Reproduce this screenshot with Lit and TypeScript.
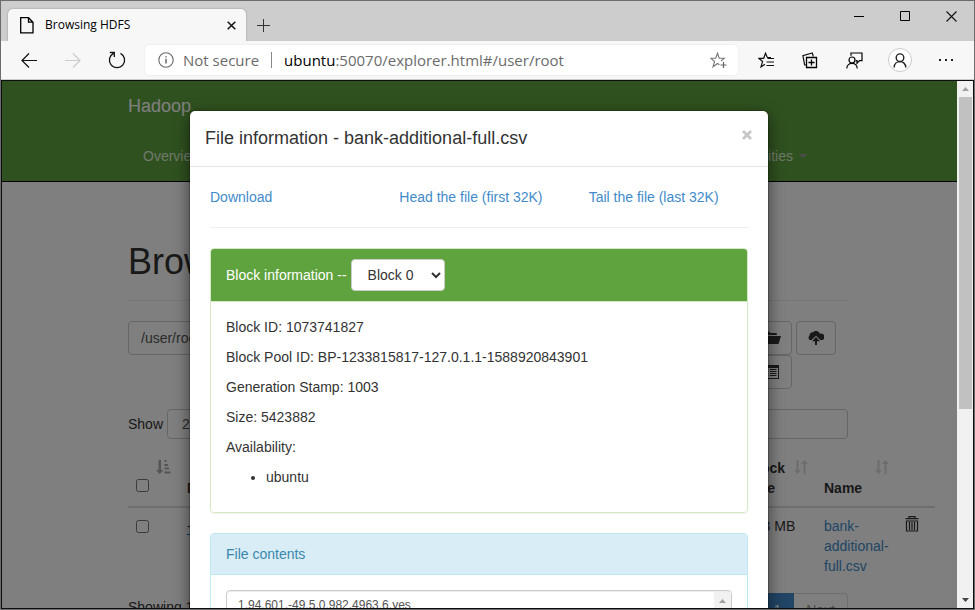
import { LitElement, html, svg, css } from "lit";
import { customElement, property } from "lit/decorators.js";

const icons = {
  doc: svg`<svg width="14" height="17" viewBox="0 0 14 17"><path d="M.7.7H8.500L13 5.200V15.800H.7ZM8.500.7V5.200H13" fill="none" stroke="#000" stroke-width="1.300"/></svg>`,
  tabClose: svg`<svg width="9" height="9" viewBox="0 0 9 9"><path d="M.7.7 8.300 8.300M8.300.7.7 8.300" stroke="#111" stroke-width="1.500"/></svg>`,
  plus: svg`<svg width="13" height="13" viewBox="0 0 13 13"><path d="M6.500 0V13M0 6.500H13" stroke="#333" stroke-width="1"/></svg>`,
  min: svg`<svg width="10" height="11" viewBox="0 0 10 11"><path d="M0 5.500H10" stroke="#000"/></svg>`,
  max: svg`<svg width="10" height="10" viewBox="0 0 10 10"><path d="M.5.5H9.500V9.500H.5Z" fill="none" stroke="#000"/></svg>`,
  close: svg`<svg width="11" height="11" viewBox="0 0 11 11"><path d="M.5.5 10.500 10.500M10.500.5.5 10.500" stroke="#111" stroke-width="1.100"/></svg>`,
  back: svg`<svg width="16" height="15" viewBox="0 0 16 15"><path d="M8 .5 1 7.500 8 14.500M1 7.500H16" fill="none" stroke="#111" stroke-width="1.200"/></svg>`,
  forward: svg`<svg width="16" height="15" viewBox="0 0 16 15"><path d="M8 .5 15 7.500 8 14.500M0 7.500H15" fill="none" stroke="#ccc" stroke-width="1.200"/></svg>`,
  reload: svg`<svg width="18" height="18" viewBox="0 0 18 18"><path d="M5.500 2.300A7.600 7.600 0 1 0 12.500 2.300M1.800 1.500H6.300V6" fill="none" stroke="#111" stroke-width="1.300"/></svg>`,
  info: svg`<svg width="16" height="16" viewBox="0 0 16 16"><circle cx="8" cy="8" r="7.200" fill="none" stroke="#666" stroke-width="1.100"/><path d="M8 6.800V11.500M8 4.200V5.400" stroke="#444" stroke-width="1.200"/></svg>`,
  starAdd: svg`<svg width="17" height="17" viewBox="0 0 17 17"><path d="M9.500 12.800 7.500 11.500 3 14.800 4.600 9.500.8 6.300H5.700L7.500 1.200 9.300 6.300H14.200L11 9" fill="none" stroke="#777" stroke-width="1.100"/><path d="M13.500 10V16M10.500 13H16.500" stroke="#666" stroke-width="1.200"/></svg>`,
  favorites: svg`<svg width="17" height="17" viewBox="0 0 17 17"><path d="M7 12.300 3 14.800 4.600 9.500.8 6.300H5.700L7.500 1.200 9.300 5.500H13" fill="none" stroke="#111" stroke-width="1.200"/><path d="M9.500 6.500H16M8.500 10H16M8.500 13.500H16" stroke="#111" stroke-width="1.200"/></svg>`,
  collections: svg`<svg width="16" height="17" viewBox="0 0 16 17"><path d="M4.500 5.500H14.500V15.500H4.500ZM9.500 7.500V13.500M6.500 10.500H12.500" fill="none" stroke="#000" stroke-width="1.300"/><path d="M3.800 12.800H2.600L.9 3.600 10.300 1 11.300 4.500" fill="none" stroke="#111" stroke-width="1.200"/></svg>`,
  feedback: svg`<svg width="17" height="17" viewBox="0 0 17 17"><circle cx="6" cy="8" r="3" fill="none" stroke="#000" stroke-width="1.200"/><path d="M.8 16.500C.8 9.700 11.200 9.700 11.200 16.500M5 3.800V1H16V8.600H13.500L11 11.300V8.600H9.800" fill="none" stroke="#000" stroke-width="1.200"/></svg>`,
  user: svg`<svg width="14" height="15" viewBox="0 0 14 15"><circle cx="7" cy="4.700" r="3.800" fill="none" stroke="#222" stroke-width="1.400"/><path d="M1.200 14.500C1.200 6.700 12.800 6.700 12.800 14.500" fill="none" stroke="#222" stroke-width="1.400"/></svg>`,
  more: svg`<svg width="16" height="4" viewBox="0 0 16 4"><path d="M1 1H3V3H1ZM7 1H9V3H7ZM13 1H15V3H13Z" fill="#222"/></svg>`,
  folder: svg`<svg width="18" height="14" viewBox="0 0 18 14"><path d="M0 11V1.500L1 .5H6L7.500 2H13.500L14 4H3.500L1 12ZM3.800 5H18L15.500 13H1.300Z" fill="#333"/></svg>`,
  upload: svg`<svg width="16" height="14" viewBox="0 0 16 14"><path d="M3.500 9H1.500A3 3 0 0 1 1.600 4.500 3.400 3.400 0 0 1 5 1.200 4.200 4.200 0 0 1 12 2.700 3 3 0 0 1 14.300 9H12.400L8 4.700Z" fill="#333"/><path d="M8 6 12 10.200H9V14H7V10.200H4Z" fill="#333"/></svg>`,
  list: svg`<svg width="14" height="14" viewBox="0 0 14 14"><path d="M0 0H14V14H0ZM1 3V13H13V3Z" fill="#333" fill-rule="evenodd"/><path d="M2.500 4.500H3.500M5 4.500H11.500M2.500 6.500H3.500M5 6.500H11.500M2.500 8.500H3.500M5 8.500H11.500M2.500 10.500H3.500M5 10.500H11.500" stroke="#333"/></svg>`,
  sort: svg`<svg width="14" height="14" viewBox="0 0 14 14"><path d="M2.500 0H4.500V10H7L3.500 14 0 10H2.500ZM9.500 14H11.500V4H14L10.500 0 7 4H9.500Z" fill="#d8d8d8"/></svg>`,
  sorted: svg`<svg width="15" height="14" viewBox="0 0 15 14"><path d="M2.500 0H5V10H7.500L3.800 14 0 10H2.500ZM8.500 0H10.500V2H8.500ZM8.500 4H12V6H8.500ZM8.500 7.500H13V9.500H8.500ZM8.500 11.500H14.500V13.500H8.500Z" fill="#aaa"/></svg>`,
  trash: svg`<svg width="14" height="16" viewBox="0 0 14 16"><path d="M4 2V.7H10V2M.5 2.700H13.500M1.500 5H12.500V15H1.500ZM4.500 6V14M7 6V14M9.500 6V14" fill="none" stroke="#333" stroke-width="1.200"/></svg>`,
  modalClose: svg`<svg width="10" height="10" viewBox="0 0 10 10"><path d="M1 1 9 9M9 1 1 9" stroke="#c6c6c6" stroke-width="2.800"/></svg>`,
  up: svg`<svg width="7" height="4" viewBox="0 0 7 4"><path d="M0 4 3.500 0 7 4Z" fill="#a0a0a0"/></svg>`,
  down: svg`<svg width="7" height="4" viewBox="0 0 7 4"><path d="M0 0H7L3.500 4Z" fill="#444"/></svg>`,
};

const reset = css`
  :host { display: block; }
  *, *::before, *::after { box-sizing: border-box; }
  svg { display: block; flex: none; }
  button { border: 0; padding: 0; margin: 0; background: none; font: inherit; color: inherit; display: flex; align-items: center; justify-content: center; }
  input, select, textarea { margin: 0; font: inherit; color: inherit; }
  a { color: #428bca; text-decoration: none; }
  ul { margin: 0; padding: 0; list-style: none; }
`;

@customElement("browser-chrome")
class BrowserChrome extends LitElement {
  @property() pageTitle = "";
  @property() host = "";
  @property() path = "";

  static styles = [reset, css`
    :host { font: 12px/16px "Open Sans", "Noto Sans", sans-serif; color: #000; }
    .tabs { display: flex; height: 40px; padding-left: 7px; background: #cdcdcd; }
    .tab { display: flex; align-items: center; width: 238px; margin-top: 8px; padding: 0 10px 0 12px; background: #f7f7f7; border-radius: 5px 5px 0 0; box-shadow: 0 0 2px #888; clip-path: inset(-3px -3px 0 -3px); }
    .tab span { flex: 1; padding-left: 11px; }
    .new { width: 34px; margin-top: 8px; }
    .controls { display: flex; margin-left: auto; height: 30px; }
    .controls button { width: 46px; }
    .bar { display: flex; align-items: center; height: 39px; padding: 0 6px; background: #f7f7f7; border-bottom: 1px solid #ccc; }
    .nav { width: 44px; height: 32px; }
    .address { display: flex; flex: 1; align-items: center; height: 30px; margin: 0 6px; padding: 0 11px 0 13px; background: #fff; border-radius: 4px; box-shadow: 0 0 2px #ddd; font-size: 15px; line-height: 20px; color: #6b6b6b; }
    .secure { display: flex; align-items: center; gap: 9px; }
    .rule { width: 1px; height: 16px; margin: 0 12px; background: #888; }
    .url { flex: 1; }
    .url b { font-weight: 400; color: #000; }
    .user { width: 24px; height: 24px; border: 1px solid #ccc; border-radius: 50%; background: #fff; margin: 0 12px; }
  `];

  render() {
    return html`
      <div class="tabs">
        <div class="tab">${icons.doc}<span>${this.pageTitle}</span><button aria-label="Close tab">${icons.tabClose}</button></div>
        <button class="new" aria-label="New tab">${icons.plus}</button>
        <div class="controls">
          <button aria-label="Minimize">${icons.min}</button>
          <button aria-label="Maximize">${icons.max}</button>
          <button aria-label="Close">${icons.close}</button>
        </div>
      </div>
      <div class="bar">
        <button class="nav" aria-label="Back">${icons.back}</button>
        <button class="nav" aria-label="Forward">${icons.forward}</button>
        <button class="nav" aria-label="Reload">${icons.reload}</button>
        <div class="address">
          <span class="secure">${icons.info}<span>Not secure</span></span>
          <span class="rule"></span>
          <span class="url"><b>${this.host}</b>${this.path}</span>
          <button aria-label="Add to favorites">${icons.starAdd}</button>
        </div>
        <button class="nav" aria-label="Favorites">${icons.favorites}</button>
        <button class="nav" aria-label="Collections">${icons.collections}</button>
        <button class="nav" aria-label="Feedback">${icons.feedback}</button>
        <button class="user" aria-label="Profile">${icons.user}</button>
        <button class="nav" aria-label="More">${icons.more}</button>
      </div>`;
  }
}

@customElement("hdfs-explorer")
class HdfsExplorer extends LitElement {
  static styles = [reset, css`
    :host { font: 14px/20px "Liberation Sans", Arial, sans-serif; color: #333; background: #fff; }
    .container { max-width: 737px; margin: 0 auto; padding-left: 17px; }
    header { background: #5fa33e; border-bottom: 1px solid #000; color: #fff; }
    .brand { display: block; height: 50px; padding-top: 15px; font-size: 18px; color: #fff; }
    .menu { display: flex; justify-content: space-between; height: 50px; padding: 15px 41px 0 15px; }
    .menu a { display: flex; align-items: center; gap: 6px; height: 20px; color: #dff0d8; }
    .caret { border: 4px solid transparent; border-top-color: #999; border-bottom: 0; }
    h1 { margin: 60px 0 20px; padding-bottom: 18px; border-bottom: 1px solid #eee; font-size: 36px; line-height: 40px; font-weight: 500; }
    .box { height: 34px; padding: 6px 12px; border: 1px solid #ccc; border-radius: 4px; background: #fff; color: #555; }
    .small { height: 30px; padding: 5px 10px; }
    .tools { display: flex; gap: 8px; }
    .tools .box { flex: 1; min-width: 0; }
    .actions { display: flex; flex-wrap: wrap; width: 84px; column-gap: 4px; margin-right: 12px; }
    .actions button { width: 40px; height: 34px; border: 1px solid #ccc; border-radius: 4px; }
    .filter { display: flex; justify-content: space-between; margin-top: 20px; }
    .filter label { display: flex; align-items: center; gap: 4px; }
    .filter select { width: 75px; appearance: none; padding: 0 14px; }
    .filter input { width: 160px; }
    table { width: calc(100% + 87px); margin-top: 11px; border-collapse: collapse; table-layout: fixed; }
    th, td { padding: 8px; text-align: left; vertical-align: top; }
    th { vertical-align: bottom; border-bottom: 2px solid #ddd; color: #333; }
    .check { width: 51px; }
    .size { width: 77px; }
    .name { width: 81px; }
    .del { width: 38px; }
    .head { display: flex; justify-content: space-between; align-items: flex-start; min-height: 40px; }
    .head span { align-self: flex-end; }
    .head svg { margin-top: 2px; }
    .check .head { display: grid; gap: 5px; justify-content: stretch; align-content: start; }
    .check .head svg { justify-self: end; }
    .check input { display: block; width: 13px; height: 13px; }
    td.check input { margin-top: 4px; }
    .perm { border-bottom: 1px dashed #08c; color: #333; }
    td .trash { height: 16px; }
    .foot { display: flex; justify-content: space-between; margin-top: 9px; }
    .foot p { margin: 4px 0; }
    .pages { display: flex; }
    .pages button { height: 34px; padding: 0 12px; border: 1px solid #ddd; color: #999; }
    .pages .on { background: #428bca; border-color: #428bca; color: #fff; }
    .pages .last { border-left: 0; border-radius: 0 4px 4px 0; }
  `];

  render() {
    return html`
      <header><div class="container">
        <a class="brand" href="#">Hadoop</a>
        <nav class="menu"><a href="#">Overview</a><a href="#">Utilities<i class="caret"></i></a></nav>
      </div></header>
      <main class="container">
        <h1>Browse</h1>
        <div class="tools">
          <input class="box" aria-label="Directory" value="/user/root">
          <div class="actions">
            <button aria-label="Create directory">${icons.folder}</button>
            <button aria-label="Upload">${icons.upload}</button>
            <button aria-label="Cut and paste">${icons.list}</button>
          </div>
        </div>
        <div class="filter">
          <label>Show <select class="box small"><option>25</option></select></label>
          <input class="box small" type="search" aria-label="Search">
        </div>
        <table>
          <thead><tr>
            <th class="check"><div class="head">${icons.sorted}<input type="checkbox" aria-label="Select all"></div></th>
            <th><div class="head"><span>Permission</span></div></th>
            <th class="size"><div class="head"><span>Block Size</span>${icons.sort}</div></th>
            <th class="name"><div class="head"><span>Name</span>${icons.sort}</div></th>
            <th class="del"></th>
          </tr></thead>
          <tbody><tr>
            <td class="check"><input type="checkbox" aria-label="Select file"></td>
            <td><a class="perm" href="#">-rw-r--r--</a></td>
            <td>128 MB</td>
            <td><a href="#">bank-additional-full.csv</a></td>
            <td><button class="trash" aria-label="Delete">${icons.trash}</button></td>
          </tr></tbody>
        </table>
        <div class="foot">
          <p>Showing 1 to 1 of 1 entries</p>
          <div class="pages"><button class="on">1</button><button class="last">Next</button></div>
        </div>
      </main>`;
  }
}

@customElement("file-dialog")
class FileDialog extends LitElement {
  @property() fileName = "";

  private details = [
    ["Block ID", "1073741827"],
    ["Block Pool ID", "BP-1233815817-127.0.1.1-1588920843901"],
    ["Generation Stamp", "1003"],
    ["Size", "5423882"],
    ["Availability", ""],
  ];

  static styles = [reset, css`
    :host { font: 14px/20px "Liberation Sans", Arial, sans-serif; color: #333; }
    .dialog { max-width: 580px; margin: 29px auto; border: 1px solid rgba(0, 0, 0, .2); border-radius: 6px; background: #fff; background-clip: padding-box; box-shadow: 0 5px 15px rgba(0, 0, 0, .5); }
    .head { display: flex; justify-content: space-between; align-items: flex-start; padding: 15px; border-bottom: 1px solid #e5e5e5; }
    h2 { margin: 0; font-size: 18px; line-height: 25px; font-weight: 400; }
    .head button { width: 12px; height: 18px; }
    .body { padding: 20px; }
    .links { display: grid; grid-template-columns: repeat(3, 1fr); margin-right: -30px; }
    hr { margin: 20px 0; border: 0; border-top: 1px solid #eee; }
    .panel { margin-bottom: 20px; border: 1px solid #d6e9c6; border-radius: 4px; box-shadow: 0 1px 1px rgba(0, 0, 0, .05); }
    .title { display: flex; align-items: center; gap: 4px; padding: 10px 15px; border-bottom: 1px solid #d6e9c6; border-radius: 3px 3px 0 0; background: #5fa33e; color: #fff; }
    select { width: 94px; height: 32px; padding: 0 0 0 12px; border: 1px solid #ccc; border-radius: 4px; background: #fff; color: #333; }
    .content { padding: 15px; }
    p { margin: 0 0 10px; }
    .nodes { margin-bottom: 10px; padding-left: 40px; list-style: disc; }
    .info { border-color: #bce8f1; }
    .info .title { border-color: #bce8f1; background: #d9edf7; color: #3a87ad; }
    .text { display: flex; height: 150px; border: 1px solid #ccc; border-radius: 4px; box-shadow: inset 0 1px 1px rgba(0, 0, 0, .08); }
    textarea { flex: 1; min-width: 0; resize: none; overflow: hidden; border: 0; background: none; padding: 4px 11px; font-size: 12px; color: #555; }
    .scroll { width: 17px; margin-top: 1px; background: #f1f1f1; }
    .scroll button { width: 17px; height: 17px; }
    .thumb { height: 60px; margin: 0 2px; background: #c1c1c1; }
  `];

  render() {
    return html`
      <section class="dialog" role="dialog" aria-labelledby="title">
        <div class="head"><h2 id="title">File information - ${this.fileName}</h2><button aria-label="Close">${icons.modalClose}</button></div>
        <div class="body">
          <div class="links"><a href="#">Download</a><a href="#">Head the file (first 32K)</a><a href="#">Tail the file (last 32K)</a></div>
          <hr>
          <div class="panel">
            <div class="title"><label for="block">Block information --</label><select id="block"><option>Block 0</option></select></div>
            <div class="content">
              ${this.details.map(([name, value]) => html`<p>${name}: ${value}</p>`)}
              <ul class="nodes"><li>ubuntu</li></ul>
            </div>
          </div>
          <div class="panel info">
            <div class="title"><label for="contents">File contents</label></div>
            <div class="content"><div class="text">
              <textarea id="contents" .value=${"1,94.601,-49.5,0.982,4963.6,yes"}></textarea>
              <div class="scroll"><button aria-label="Scroll up">${icons.up}</button><div class="thumb"></div></div>
            </div></div>
          </div>
        </div>
      </section>`;
  }
}

@customElement("app-root")
class AppRoot extends LitElement {
  static styles = [reset, css`
    .window { display: flex; flex-direction: column; height: 100vh; overflow: hidden; border: 1px solid #6c6c6c; }
    .view { display: flex; flex: 1; min-height: 0; border: 1px solid #0d0d12; border-bottom: 0; }
    .page { position: relative; flex: 1; min-width: 0; overflow: hidden; }
    .shade { position: absolute; inset: 0; overflow: hidden; padding-right: 1px; background: rgba(0, 0, 0, .5); border-bottom: 1px solid #0d0d12; }
    .scroll { display: flex; flex-direction: column; width: 16px; background: #f1f1f1; border-bottom: 1px solid #0d0d12; }
    .scroll button { height: 16px; width: 16px; }
    .track { flex: 1; }
    .thumb { height: 63%; margin: 0 1px 0 2px; background: #c1c1c1; }
  `];

  render() {
    return html`
      <div class="window">
        <browser-chrome pageTitle="Browsing HDFS" host="ubuntu" path=":50070/explorer.html#/user/root"></browser-chrome>
        <div class="view">
          <div class="page">
            <hdfs-explorer></hdfs-explorer>
            <div class="shade"><file-dialog fileName="bank-additional-full.csv"></file-dialog></div>
          </div>
          <div class="scroll">
            <button aria-label="Scroll up">${icons.up}</button>
            <div class="track"><div class="thumb"></div></div>
            <button aria-label="Scroll down">${icons.down}</button>
          </div>
        </div>
      </div>`;
  }
}
